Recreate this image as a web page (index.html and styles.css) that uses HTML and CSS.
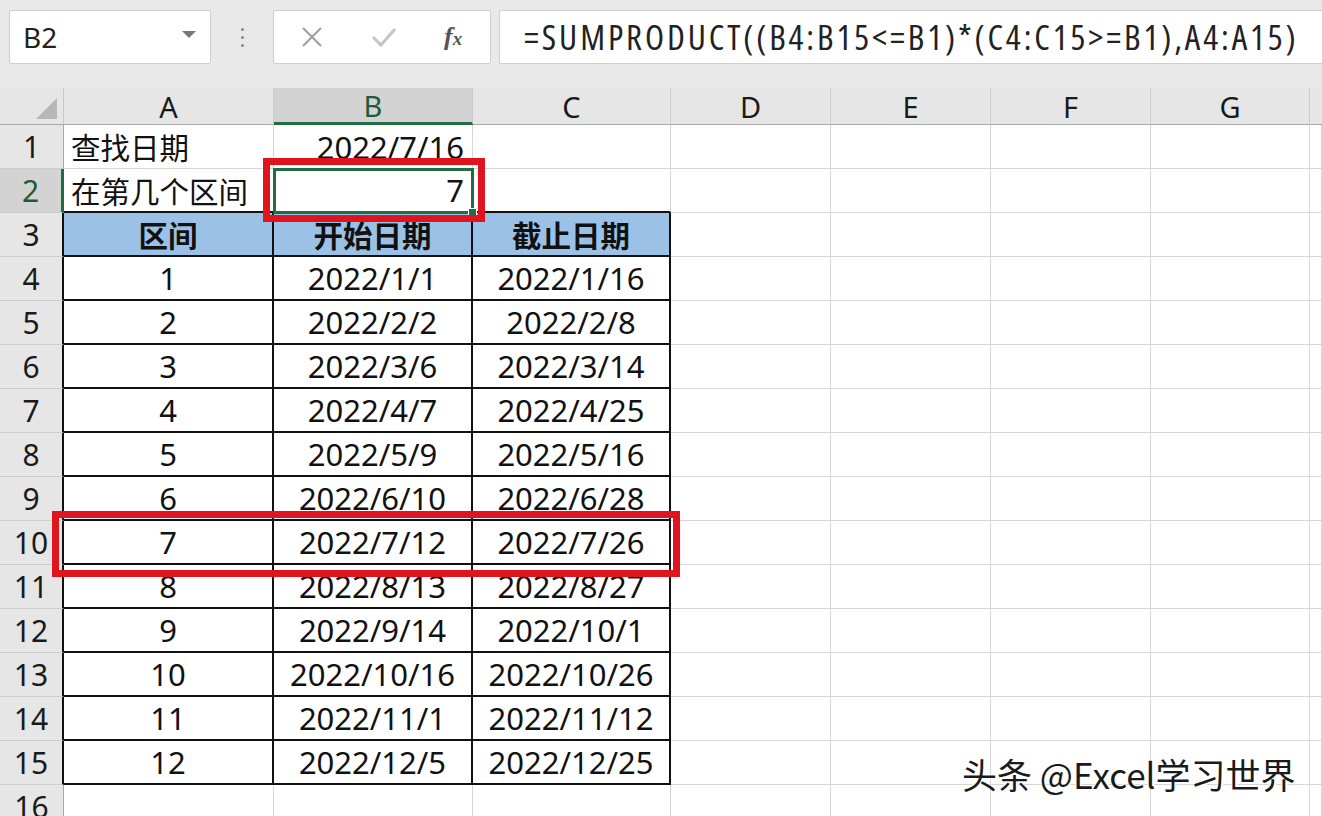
FILE: index.html
```html
<!DOCTYPE html>
<html lang="zh">
<head>
<meta charset="utf-8">
<link rel="stylesheet" href="styles.css">
</head>
<body>
<div class="app">
  <div class="toolbar">
    <div class="namebox"><span class="name">B2</span><span class="caret"></span></div>
    <div class="dots"><i></i><i></i><i></i></div>
    <div class="btns">
      <svg class="ico" width="24" height="24" viewBox="0 0 24 24"><path d="M3 3 L21 21 M21 3 L3 21" stroke="#a0a0a0" stroke-width="2.2" fill="none"/></svg>
      <svg class="ico" width="28" height="24" viewBox="0 0 28 24"><path d="M3 12 L11 20 L25 4" stroke="#c4c4c4" stroke-width="3" fill="none"/></svg>
      <span class="fx">f<small>x</small></span>
    </div>
    <div class="formula">=SUMPRODUCT((B4:B15&lt;=B1)*(C4:C15&gt;=B1),A4:A15)</div>
  </div>
  <div class="sheet">
    <div class="grid">
      <div class="corner"><span class="tri"></span></div>
      <div class="ch">A</div><div class="ch sel">B</div><div class="ch">C</div><div class="ch">D</div><div class="ch">E</div><div class="ch">F</div><div class="ch">G</div><div class="ch last"></div>

      <div class="rh">1</div><div class="c l">查找日期</div><div class="c r">2022/7/16</div><div class="c"></div><div class="c"></div><div class="c"></div><div class="c"></div><div class="c"></div><div class="c"></div>
      <div class="rh sel">2</div><div class="c l tb">在第几个区间</div><div class="c r tb">7</div><div class="c tb"></div><div class="c"></div><div class="c"></div><div class="c"></div><div class="c"></div><div class="c"></div>
      <div class="rh tl">3</div><div class="c t h">区间</div><div class="c t h">开始日期</div><div class="c t h">截止日期</div><div class="c"></div><div class="c"></div><div class="c"></div><div class="c"></div><div class="c"></div>
      <div class="rh tl">4</div><div class="c t">1</div><div class="c t">2022/1/1</div><div class="c t">2022/1/16</div><div class="c"></div><div class="c"></div><div class="c"></div><div class="c"></div><div class="c"></div>
      <div class="rh tl">5</div><div class="c t">2</div><div class="c t">2022/2/2</div><div class="c t">2022/2/8</div><div class="c"></div><div class="c"></div><div class="c"></div><div class="c"></div><div class="c"></div>
      <div class="rh tl">6</div><div class="c t">3</div><div class="c t">2022/3/6</div><div class="c t">2022/3/14</div><div class="c"></div><div class="c"></div><div class="c"></div><div class="c"></div><div class="c"></div>
      <div class="rh tl">7</div><div class="c t">4</div><div class="c t">2022/4/7</div><div class="c t">2022/4/25</div><div class="c"></div><div class="c"></div><div class="c"></div><div class="c"></div><div class="c"></div>
      <div class="rh tl">8</div><div class="c t">5</div><div class="c t">2022/5/9</div><div class="c t">2022/5/16</div><div class="c"></div><div class="c"></div><div class="c"></div><div class="c"></div><div class="c"></div>
      <div class="rh tl">9</div><div class="c t">6</div><div class="c t">2022/6/10</div><div class="c t">2022/6/28</div><div class="c"></div><div class="c"></div><div class="c"></div><div class="c"></div><div class="c"></div>
      <div class="rh tl">10</div><div class="c t">7</div><div class="c t">2022/7/12</div><div class="c t">2022/7/26</div><div class="c"></div><div class="c"></div><div class="c"></div><div class="c"></div><div class="c"></div>
      <div class="rh tl">11</div><div class="c t">8</div><div class="c t">2022/8/13</div><div class="c t">2022/8/27</div><div class="c"></div><div class="c"></div><div class="c"></div><div class="c"></div><div class="c"></div>
      <div class="rh tl">12</div><div class="c t">9</div><div class="c t">2022/9/14</div><div class="c t">2022/10/1</div><div class="c"></div><div class="c"></div><div class="c"></div><div class="c"></div><div class="c"></div>
      <div class="rh tl">13</div><div class="c t">10</div><div class="c t">2022/10/16</div><div class="c t">2022/10/26</div><div class="c"></div><div class="c"></div><div class="c"></div><div class="c"></div><div class="c"></div>
      <div class="rh tl">14</div><div class="c t">11</div><div class="c t">2022/11/1</div><div class="c t">2022/11/12</div><div class="c"></div><div class="c"></div><div class="c"></div><div class="c"></div><div class="c"></div>
      <div class="rh tl">15</div><div class="c t">12</div><div class="c t">2022/12/5</div><div class="c t">2022/12/25</div><div class="c"></div><div class="c"></div><div class="c"></div><div class="c"></div><div class="c"></div>
      <div class="rh">16</div><div class="c"></div><div class="c"></div><div class="c"></div><div class="c"></div><div class="c"></div><div class="c"></div><div class="c"></div><div class="c"></div>
    </div>
    <div class="selbox"><span class="handle"></span></div>
    <div class="redbox rb1"></div>
    <div class="redbox rb2"></div>
    <div class="watermark">头条 @Excel学习世界</div>
  </div>
</div>
</body>
</html>
```
FILE: styles.css
```css
* { box-sizing: border-box; }
html, body { margin: 0; padding: 0; }
body {
  width: 1322px; height: 816px; overflow: hidden;
  background: #e8e8e8;
  font-family: "Noto Sans", "Noto Sans CJK SC", sans-serif;
  color: #111;
}
.app { display: flex; flex-direction: column; }
.toolbar {
  height: 88px; display: flex; align-items: flex-start;
  padding: 10px 0 0 9px; background: #e9e9e9;
}
.namebox {
  width: 202px; height: 54px; background: #fff; border: 1px solid #cfcfcf; border-radius: 2px;
  display: flex; align-items: center; justify-content: space-between; padding: 0 14px 0 13px;
}
.name { font-size: 28px; color: #222; }
.caret { width: 0; height: 0; border-left: 7px solid transparent; border-right: 7px solid transparent; border-top: 7px solid #777; margin-bottom: 6px; }
.dots { width: 62px; height: 54px; display: flex; flex-direction: column; align-items: center; justify-content: center; gap: 5px; }
.dots i { width: 3px; height: 3px; background: #888; border-radius: 50%; display: block; }
.btns {
  width: 218px; height: 54px; background: #fff; border: 1px solid #cfcfcf; border-radius: 2px;
  display: flex; align-items: center; padding: 0 0 0 26px; gap: 0;
}
.btns .ico:first-child { margin-right: 46px; }
.btns .ico:nth-child(2) { margin-right: 46px; }
.fx { font-family: "Liberation Serif", serif; font-style: italic; font-weight: bold; font-size: 26px; color: #555; }
.fx small { font-size: 19px; }
.formula {
  margin-left: 8px; flex: 1; height: 54px; background: #fff; border: 1px solid #cfcfcf; border-right: none; border-radius: 2px 0 0 2px;
  display: flex; align-items: center; padding-left: 24px; padding-bottom: 2px;
  font-size: 35px; color: #222; letter-spacing: 2.9px; white-space: nowrap; overflow: hidden;
  font-family: "Open Sans", "Noto Sans", sans-serif; font-stretch: 75%;
}
.sheet { position: relative; background: #fff; }
.grid {
  display: grid;
  grid-template-columns: 64px 210px 199px 198px 160px 160px 160px 159px 1fr;
  grid-template-rows: 37px repeat(16, 44px);
}
.corner { background: #e6e6e6; border-right: 1px solid #c9c9c9; border-bottom: 1px solid #a8a8a8; position: relative; }
.tri { position: absolute; right: 6px; bottom: 5px; width: 0; height: 0; border-left: 21px solid transparent; border-bottom: 21px solid #b7b7b7; }
.ch {
  background: #e6e6e6; border-right: 1px solid #cdcdcd; border-bottom: 1px solid #a8a8a8;
  display: flex; align-items: center; justify-content: center; font-size: 29px; color: #1a1a1a;
}
.ch.sel { background: #d3d3d3; border-bottom: 3px solid #1e6e42; color: #1f5c3a; }
.ch.last { border-right: none; }
.rh {
  background: #e6e6e6; border-right: 1px solid #a8a8a8; border-bottom: 1px solid #cdcdcd;
  display: flex; align-items: center; justify-content: center; font-size: 30px; color: #1a1a1a;
}
.rh.sel { background: #d3d3d3; border-right: 3px solid #1e6e42; color: #1f5c3a; }
.rh.tl { border-right: 2px solid #111; }
.c {
  border-right: 1px solid #d6d6d6; border-bottom: 1px solid #d6d6d6;
  display: flex; align-items: center; justify-content: center; font-size: 31px; color: #111;
  white-space: nowrap;
}
.c.l { justify-content: flex-start; padding-left: 7px; font-size: 29.5px; }
.c.r { justify-content: flex-end; padding-right: 8px; }
.c.tb { border-bottom: 2px solid #111; }
.c.t { border-right: 2px solid #111; border-bottom: 2px solid #111; }
.c.h { background: #9bc2e6; font-weight: bold; font-size: 29.5px; }
.selbox {
  position: absolute; left: 273px; top: 80px; width: 201px; height: 46px;
  border: 3px solid #1e6e42;
}
.handle { position: absolute; right: -6px; bottom: -6px; width: 9px; height: 9px; background: #1e6e42; border: 1px solid #fff; }
.redbox { position: absolute; border: 7px solid #e0141e; }
.rb1 { left: 263px; top: 70px; width: 222px; height: 64px; }
.rb2 { left: 52px; top: 423px; width: 628px; height: 66px; }
.watermark {
  position: absolute; left: 962px; top: 660px; font-size: 35px; color: #1a1a1a;
  font-family: "Noto Sans CJK SC", "Noto Sans", sans-serif;
  text-shadow: 2px 1px 0 #fff, -1px -1px 0 #fff;
}
```
